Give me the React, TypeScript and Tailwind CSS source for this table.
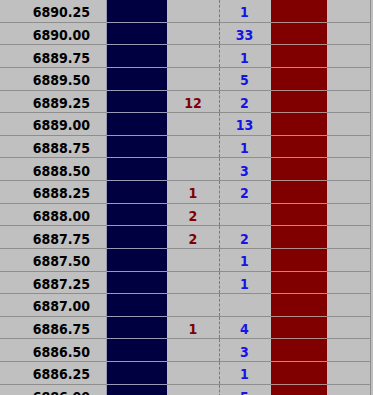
import React from 'react';

type Row = { price: string; bid?: number; ask?: number };

const rows: Row[] = [
  { price: '6890.25', ask: 1 },
  { price: '6890.00', ask: 33 },
  { price: '6889.75', ask: 1 },
  { price: '6889.50', ask: 5 },
  { price: '6889.25', bid: 12, ask: 2 },
  { price: '6889.00', ask: 13 },
  { price: '6888.75', ask: 1 },
  { price: '6888.50', ask: 3 },
  { price: '6888.25', bid: 1, ask: 2 },
  { price: '6888.00', bid: 2 },
  { price: '6887.75', bid: 2, ask: 2 },
  { price: '6887.50', ask: 1 },
  { price: '6887.25', ask: 1 },
  { price: '6887.00' },
  { price: '6886.75', bid: 1, ask: 4 },
  { price: '6886.50', ask: 3 },
  { price: '6886.25', ask: 1 },
  { price: '6886.00', ask: 5 },
];

const LadderRow = ({ row }: { row: Row }) => (
  <div className="flex h-[22.625px] w-[371px] shrink-0 text-[14px] font-bold leading-none">
    {/* price */}
    <div className="flex w-[106px] items-center justify-end border-b border-[#8e8e8e] pr-[16px] pt-[3px] text-black">
      {row.price}
    </div>
    {/* bid bar */}
    <div className="w-[61px] border-b border-l border-[#9a9ab4] bg-[#000040]" />
    {/* bid volume */}
    <div className="flex w-[52px] items-center justify-center border-b border-[#8e8e8e] pt-[3px] text-[#800000]">
      {row.bid ?? ''}
    </div>
    {/* ask volume, dashed divider on the left */}
    <div className="flex w-[52px] border-b border-[#8e8e8e]">
      <div className="border-l border-dashed border-[#7a7a7a]" />
      <div className="flex flex-1 items-center justify-center pr-[2px] pt-[3px] text-[#1414e6]">
        {row.ask ?? ''}
      </div>
    </div>
    {/* ask bar */}
    <div className="w-[56px] border-b border-[#b48c8c] bg-[#800000]" />
    {/* empty */}
    <div className="w-[44px] border-b border-r border-[#8e8e8e]" />
  </div>
);

export default function App() {
  return (
    <div
      className="flex h-[395px] w-[373px] flex-col overflow-hidden bg-[#c0c0c0]"
      style={{ fontFamily: '"DejaVu Sans Condensed", "DejaVu Sans", Tahoma, sans-serif' }}
    >
      {rows.map((r) => (
        <LadderRow key={r.price} row={r} />
      ))}
    </div>
  );
}
